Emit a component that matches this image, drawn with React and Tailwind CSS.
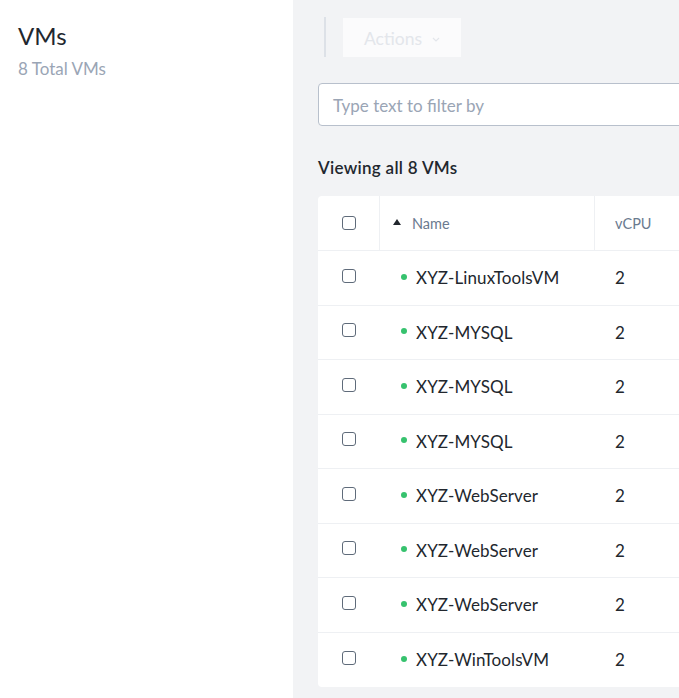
const vms = [
  "XYZ-LinuxToolsVM",
  "XYZ-MYSQL",
  "XYZ-MYSQL",
  "XYZ-MYSQL",
  "XYZ-WebServer",
  "XYZ-WebServer",
  "XYZ-WebServer",
  "XYZ-WinToolsVM",
];

function Box() {
  return <span className="block w-[14px] h-[14px] rounded-[3px] border border-[#5f6b7a] bg-white" />;
}

export default function App() {
  return (
    <div className="flex h-[698px] w-[679px] overflow-hidden bg-[#f2f3f5] font-['Lato',sans-serif] text-[#22272e]">
      <aside className="w-[293px] shrink-0 bg-white px-[18px] pt-[21px]">
        <h1 className="text-[24px] leading-[30px] text-[#22272e]">VMs</h1>
        <p className="mt-[8px] text-[17px] leading-[20px] text-[#9aa5b5]">8 Total VMs</p>
      </aside>

      <main className="flex-1 min-w-0 pl-[25px] pt-[17px]">
        <div className="flex items-center h-[40px]">
          <span className="ml-[6px] w-[2px] h-[40px] bg-[#dde1e7]" />
          <button className="ml-[17px] mt-[1px] h-[39px] w-[118px] flex items-center justify-center gap-[10px] pt-[3px] bg-[#fbfbfc] text-[17.5px] text-[#e3e6eb]">
            Actions
            <svg width="8" height="5" viewBox="0 0 8 5" fill="none" stroke="#e3e6eb" strokeWidth="1.2">
              <path d="M1 1l3 3 3-3" />
            </svg>
          </button>
        </div>

        <div className="mt-[26px] h-[43px] w-[420px] flex items-center rounded-[4px] border border-[#b8c0cc] bg-white pl-[14px] pt-[2px] text-[17px] text-[#9aa5b5]">
          Type text to filter by
        </div>

        <div className="mt-[31px] text-[17px] font-semibold leading-[22px] tracking-[0.3px] text-[#22272e]">Viewing all 8 VMs</div>

        <div className="mt-[17px] w-[420px] rounded-[4px] bg-white">
          <div className="flex h-[55px] border-b border-[#eef0f3] text-[14.5px] text-[#6b7a8f]">
            <div className="w-[62px] flex items-center justify-center border-r border-[#eef0f3]">
              <Box />
            </div>
            <div className="w-[215px] flex items-center pl-[13px] pt-[2px] border-r border-[#eef0f3]">
              <svg width="8" height="6" viewBox="0 0 8 6" className="mr-[11px] mb-[4px]">
                <path d="M4 0L8 6H0z" fill="#22272e" />
              </svg>
              Name
            </div>
            <div className="flex items-center pl-[20px] pt-[2px]">vCPU</div>
          </div>
          {vms.map((name, i) => (
            <div
              key={i}
              className={
                "flex h-[54.5px] text-[17px] tracking-[0.1px] text-[#22272e] " +
                (i < vms.length - 1 ? "border-b border-[#eef0f3]" : "")
              }
            >
              <div className="w-[62px] flex items-center justify-center pb-[4px]">
                <Box />
              </div>
              <div className="w-[215px] flex items-center pl-[21px]">
                <span className="w-[6px] h-[6px] rounded-full bg-[#36c26e] mr-[9px] mb-[2px]" />
                {name}
              </div>
              <div className="flex items-center pl-[20px]">2</div>
            </div>
          ))}
        </div>
      </main>
    </div>
  );
}
